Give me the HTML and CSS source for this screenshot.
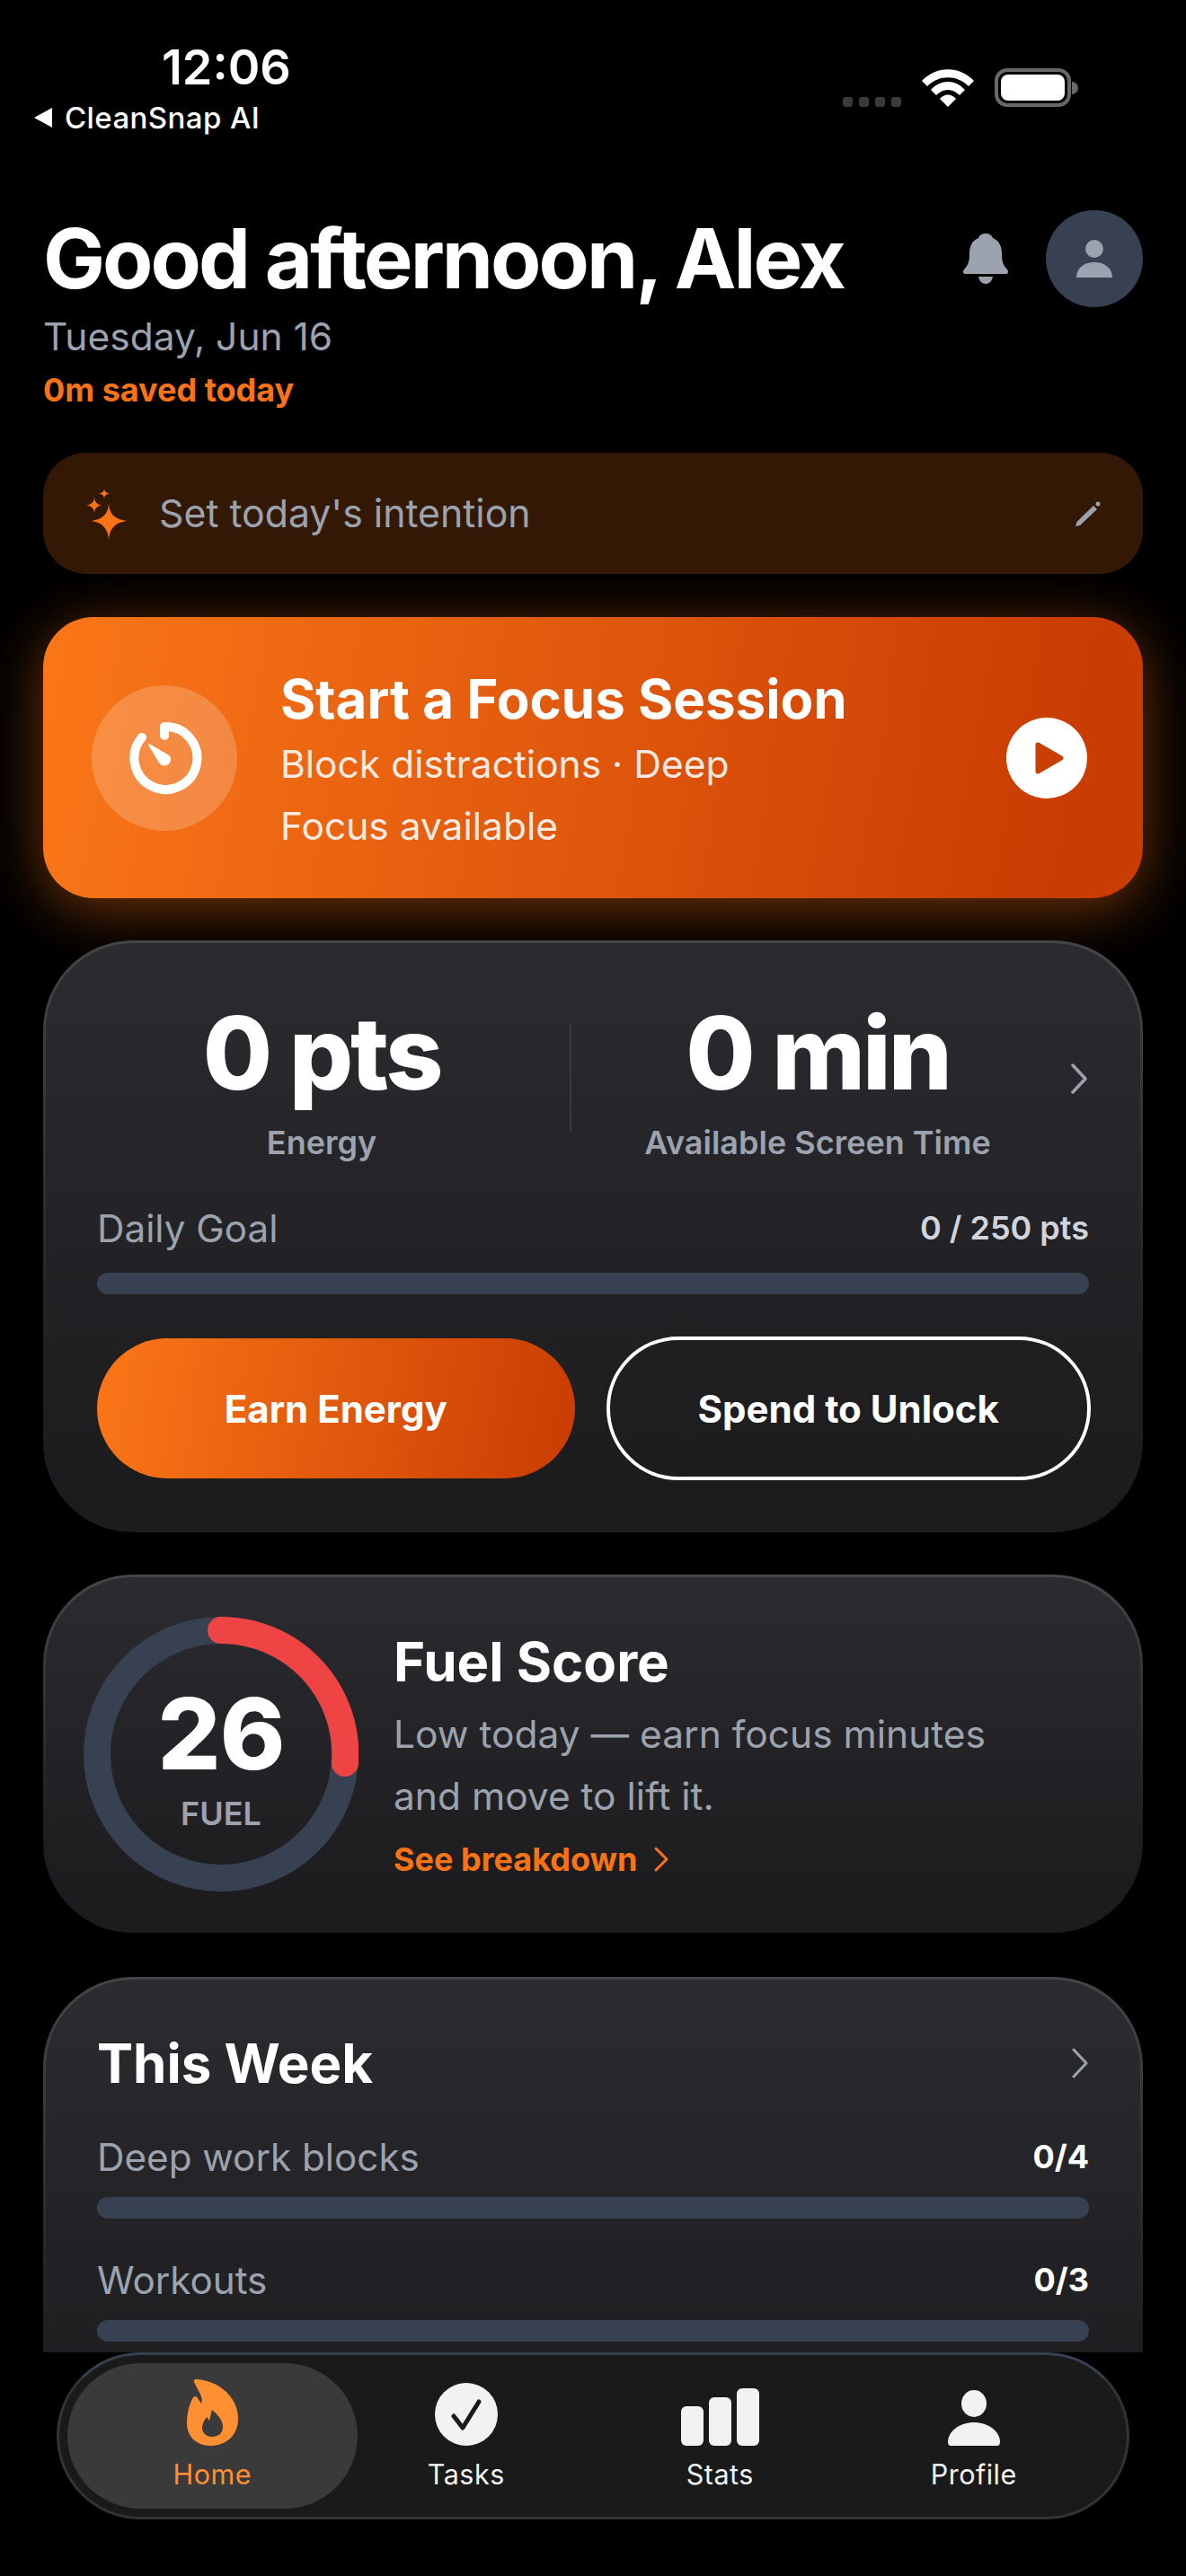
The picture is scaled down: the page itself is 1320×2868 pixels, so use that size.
FILE: index.html
```html
<!DOCTYPE html>
<html lang="en">
<head>
    <meta charset="UTF-8">
    <meta name="viewport" content="width=device-width, initial-scale=1.0">
    <title>CleanSnap AI</title>
    <link rel="stylesheet" href="styles.css">
</head>
<body>
    <div class="screen">
        <div class="content">

            <div class="status">
                <div class="status_left">
                    <div class="time">12:06</div>
                    <div class="back"><span class="back_arrow"></span>CleanSnap AI</div>
                </div>
                <div class="status_right">
                    <div class="signal"><span></span><span></span><span></span><span></span></div>
                    <svg class="wifi" width="58" height="42" viewBox="0 0 58 42">
                        <path d="M0 13 C16 -4 42 -4 58 13 L52 19 C39 6 19 6 6 19Z" fill="#fff"/>
                        <path d="M10 23 C21 11 37 11 48 23 L42 29 C34 21 24 21 16 29Z" fill="#fff"/>
                        <path d="M20 33 C25 27 33 27 38 33 L29 42Z" fill="#fff"/>
                    </svg>
                    <div class="battery"><div class="battery_fill"></div></div>
                    <div class="battery_nub"></div>
                </div>
            </div>

            <div class="header">
                <div class="header_text">
                    <h1 class="greeting">Good afternoon, Alex</h1>
                    <div class="date">Tuesday, Jun 16</div>
                    <div class="saved">0m saved today</div>
                </div>
                <svg class="bell" width="50" height="56" viewBox="0 0 50 56">
                    <path d="M25 0 C29 0 32 2 33 5 C40 8 43 14 43 22 C43 30 44 35 49 40 C51 43 50 45 47 45 L3 45 C0 45 -1 43 1 40 C6 35 7 30 7 22 C7 14 10 8 17 5 C18 2 21 0 25 0Z" fill="#9ca3af"/>
                    <path d="M17 48 L33 48 C32 53 29 56 25 56 C21 56 18 53 17 48Z" fill="#9ca3af"/>
                </svg>
                <div class="avatar">
                    <svg width="40" height="42" viewBox="0 0 40 42">
                        <circle cx="20" cy="10" r="10" fill="#9ca3af"/>
                        <path d="M0 42 C0 31 9 25 20 25 C31 25 40 31 40 42Z" fill="#9ca3af"/>
                    </svg>
                </div>
            </div>

            <div class="intention">
                <svg class="sparkle" width="46" height="58" viewBox="0 0 46 58">
                    <path d="M26 18 C27 30 33 35 46 37 C33 39 27 45 26 58 C25 45 19 39 7 37 C19 35 25 30 26 18Z" fill="#f97316"/>
                    <path d="M10 10 C10 16 13 19 19 19.500 C13 20 10 23 10 29 C10 23 7 20 0 19.500 C7 19 10 16 10 10Z" fill="#f97316"/>
                    <path d="M21 0 C21 4 23 6 27 6.500 C23 7 21 9 21 13 C21 9 19 7 15 6.500 C19 6 21 4 21 0Z" fill="#f97316"/>
                </svg>
                <span class="intention_text">Set today's intention</span>
                <svg class="pencil" width="30" height="28" viewBox="0 0 30 28">
                    <path d="M1 28 L2.500 23 L21 5 L25 9 L6 27Z" fill="#9ca3af"/>
                    <circle cx="26" cy="3" r="2.500" fill="#9ca3af"/>
                </svg>
            </div>

            <div class="focus">
                <div class="focus_icon">
                    <svg width="84" height="84" viewBox="0 0 84 84">
                        <path d="M17 19 A35 35 0 1 0 42 7 L42 17" fill="none" stroke="#fff" stroke-width="10" stroke-linecap="round" stroke-linejoin="round"/>
                        <path d="M25 27 L47 40 A6 6 0 1 1 37 47Z" fill="#fff" stroke="#fff" stroke-width="2" stroke-linejoin="round"/>
                    </svg>
                </div>
                <div class="focus_text">
                    <div class="focus_title">Start a Focus Session</div>
                    <div class="focus_sub">Block distractions · Deep Focus available</div>
                </div>
                <div class="play">
                    <svg width="34" height="38" viewBox="0 0 34 38">
                        <path d="M4 4 L30 19 L4 34Z" fill="#c93e02" stroke="#c93e02" stroke-width="5" stroke-linejoin="round"/>
                    </svg>
                </div>
            </div>

            <div class="card energy">
                <div class="stats">
                    <div class="stat stat_energy">
                        <div class="stat_value">0 pts</div>
                        <div class="stat_label">Energy</div>
                    </div>
                    <div class="stat_divider"></div>
                    <div class="stat stat_time">
                        <div class="stat_value">0 min</div>
                        <div class="stat_label">Available Screen Time</div>
                    </div>
                    <svg class="chevron stat_chevron" width="20" height="34" viewBox="0 0 20 34">
                        <path d="M3 2 L17 17 L3 32" fill="none" stroke="#9ca3af" stroke-width="3.500" stroke-linecap="round" stroke-linejoin="round"/>
                    </svg>
                </div>
                <div class="row_label goal_label">
                    <span class="row_name">Daily Goal</span>
                    <span class="goal_value">0 / 250 pts</span>
                </div>
                <div class="bar"></div>
                <div class="buttons">
                    <div class="btn btn_earn">Earn Energy</div>
                    <div class="btn btn_spend">Spend to Unlock</div>
                </div>
            </div>

            <div class="card fuel">
                <div class="ring">
                    <svg width="306" height="306" viewBox="0 0 306 306">
                        <circle cx="153" cy="153" r="138" fill="none" stroke="#374151" stroke-width="30"/>
                        <path d="M153 15 A138 138 0 0 1 291 163" fill="none" stroke="#ef4444" stroke-width="30" stroke-linecap="round"/>
                    </svg>
                    <div class="ring_text">
                        <div class="ring_value">26</div>
                        <div class="ring_label">FUEL</div>
                    </div>
                </div>
                <div class="fuel_text">
                    <div class="card_title">Fuel Score</div>
                    <div class="fuel_desc">Low today — earn focus minutes and move to lift it.</div>
                    <div class="fuel_link">See breakdown
                        <svg width="16" height="28" viewBox="0 0 16 28">
                            <path d="M2 2 L14 14 L2 26" fill="none" stroke="#f97316" stroke-width="3" stroke-linecap="round" stroke-linejoin="round"/>
                        </svg>
                    </div>
                </div>
            </div>

            <div class="card week">
                <div class="week_head">
                    <div class="card_title">This Week</div>
                    <svg class="chevron" width="20" height="34" viewBox="0 0 20 34">
                        <path d="M3 2 L17 17 L3 32" fill="none" stroke="#9ca3af" stroke-width="3" stroke-linecap="round" stroke-linejoin="round"/>
                    </svg>
                </div>
                <div class="row_label week_label">
                    <span class="row_name">Deep work blocks</span>
                    <span class="week_value">0/4</span>
                </div>
                <div class="bar"></div>
                <div class="row_label week_label week_label_next">
                    <span class="row_name">Workouts</span>
                    <span class="week_value">0/3</span>
                </div>
                <div class="bar"></div>
            </div>

        </div>

        <div class="nav">
            <div class="nav_item active">
                <svg width="57" height="74" viewBox="0 0 57 74">
                    <path fill-rule="evenodd" d="M8 3 C7 0 10 0 12 0 C36 2 57 20 57 44 C57 62 44 74 27 74 C11 74 0 64 0 49 C0 38 3 27 7 20 C9 18 11 19 12 21 L16 27 C19 20 12 12 8 3Z M28 34 C35 40 40 46 40 53 C40 60 35 64 28 64 C22 64 17 60 17 54 C17 50 19 46 22 42 L25 46Z" fill="#ff8f33"/>
                </svg>
                <span>Home</span>
            </div>
            <div class="nav_item">
                <svg width="70" height="70" viewBox="0 0 70 70">
                    <circle cx="35" cy="35" r="35" fill="#f2f2f2"/>
                    <path d="M21 37 L31 50 L49 21" fill="none" stroke="#1a1a1a" stroke-width="5" stroke-linecap="round" stroke-linejoin="round"/>
                </svg>
                <span>Tasks</span>
            </div>
            <div class="nav_item">
                <svg width="87" height="64" viewBox="0 0 87 64">
                    <rect x="0" y="20" width="25" height="44" rx="6" fill="#f2f2f2"/>
                    <rect x="31" y="10" width="25" height="54" rx="6" fill="#f2f2f2"/>
                    <rect x="62" y="0" width="25" height="64" rx="6" fill="#f2f2f2"/>
                </svg>
                <span>Stats</span>
            </div>
            <div class="nav_item">
                <svg width="58" height="62" viewBox="0 0 58 62">
                    <ellipse cx="29" cy="15" rx="14" ry="15" fill="#f2f2f2"/>
                    <path d="M0 58 C0 46 13 36 29 36 C45 36 58 46 58 58 C58 60 57 62 55 62 L3 62 C1 62 0 60 0 58Z" fill="#f2f2f2"/>
                </svg>
                <span>Profile</span>
            </div>
        </div>
    </div>
</body>
</html>
```

FILE: styles.css
```css
*{
    box-sizing: border-box;
}

body{
    margin: 0;
    background: #000;
    font-family: "Inter", "Liberation Sans", sans-serif;
    color: #fff;
}

.screen{
    height: 2868px;
    display: flex;
    flex-direction: column;
    overflow: hidden;
}

.content{
    height: 2619px;
    flex: none;
    overflow: hidden;
    padding: 48px 48px 0;
}

/* status bar */
.status{
    display: flex;
    justify-content: space-between;
    height: 102px;
}

.status_left{
    margin-left: -10px;
}

.time{
    font-size: 54px;
    line-height: 54px;
    font-weight: 600;
    padding-left: 142px;
}

.back{
    display: flex;
    align-items: center;
    font-size: 33px;
    line-height: 40px;
    font-weight: 500;
    letter-spacing: 0.4px;
    margin-top: 9px;
}

.back_arrow{
    width: 0;
    height: 0;
    border-top: 11px solid transparent;
    border-bottom: 11px solid transparent;
    border-right: 20px solid #fff;
    margin-right: 14px;
}

.status_right{
    display: flex;
    align-items: flex-end;
    height: 71px;
    padding-right: 72px;
}

.signal{
    display: flex;
    gap: 7px;
    margin-right: 23px;
}

.signal span{
    width: 11px;
    height: 11px;
    border-radius: 3px;
    background: #3a3a3c;
}

.wifi{
    margin-right: 23px;
}

.battery{
    width: 85px;
    height: 43px;
    border: 4px solid #68686a;
    border-radius: 14px;
    padding: 3px;
}

.battery_fill{
    height: 100%;
    background: #fff;
    border-radius: 8px;
}

.battery_nub{
    width: 7px;
    height: 14px;
    margin: 0 0 14px 1px;
    background: #68686a;
    border-radius: 0 7px 7px 0;
}

/* greeting */
.header{
    display: flex;
    align-items: flex-start;
    margin-top: 84px;
}

.header_text{
    flex: 1;
    padding-top: 8px;
}

.greeting{
    margin: 0;
    font-size: 92px;
    line-height: 92px;
    font-weight: 700;
    letter-spacing: -3px;
}

.date{
    margin-top: 13px;
    font-size: 42.500px;
    line-height: 56px;
    color: #9ca3af;
}

.saved{
    margin-top: 9px;
    font-size: 36px;
    line-height: 44px;
    font-weight: 700;
    color: #f97316;
}

.bell{
    margin: 26px 42px 0 0;
}

.avatar{
    width: 108px;
    height: 108px;
    border-radius: 50%;
    background: #374151;
    display: flex;
    align-items: center;
    justify-content: center;
}

/* intention */
.intention{
    display: flex;
    align-items: center;
    height: 135px;
    margin-top: 48px;
    padding: 0 46px 0 47px;
    border-radius: 48px;
    background: #331905;
}

.sparkle{
    margin-right: 36px;
}

.intention_text{
    flex: 1;
    font-size: 42.800px;
    color: #9ca3af;
}

.pencil{
    flex: none;
}

/* focus */
.focus{
    display: flex;
    align-items: center;
    height: 313px;
    margin-top: 48px;
    padding: 0 62px 0 54px;
    border-radius: 56px;
    background: linear-gradient(100deg, #fa7718, #c93c02 92%);
    box-shadow: 0 12px 64px rgba(249,115,22,0.45);
}

.focus_icon{
    width: 162px;
    height: 162px;
    flex: none;
    margin-right: 48px;
    border-radius: 50%;
    background: rgba(255,255,255,0.2);
    display: flex;
    align-items: center;
    justify-content: center;
}

.focus_text{
    flex: 1;
    padding-top: 6px;
}

.focus_title{
    font-size: 60px;
    line-height: 76px;
    font-weight: 700;
}

.focus_sub{
    width: 560px;
    font-size: 42.500px;
    line-height: 69px;
    color: rgba(255,255,255,0.88);
}

.play{
    width: 90px;
    height: 90px;
    flex: none;
    border-radius: 50%;
    background: #fff;
    display: flex;
    align-items: center;
    justify-content: center;
    padding-left: 6px;
}

/* cards */
.card{
    padding: 0 57px;
    border: 3px solid transparent;
    background: linear-gradient(#2b2b30, #1b1b1d) padding-box, linear-gradient(#464648, #1c1c1e 75%) border-box;
}

.card_title{
    font-size: 60px;
    line-height: 76px;
    font-weight: 700;
}

.energy{
    height: 659px;
    margin-top: 47px;
    padding-top: 57px;
    border-radius: 100px;
}

.stats{
    display: flex;
    align-items: center;
}

.stat{
    text-align: center;
}

.stat_energy{
    width: 552px;
    margin-left: -26px;
}

.stat_time{
    width: 548px;
}

.stat_value{
    font-size: 112px;
    line-height: 130px;
    font-weight: 800;
    letter-spacing: -3px;
}

.stat_label{
    font-size: 36px;
    line-height: 44px;
    font-weight: 600;
    color: #9ca3af;
    margin-top: 13px;
}

.stat_divider{
    width: 2px;
    height: 120px;
    background: #3a3a3e;
}

.chevron{
    flex: none;
}

.stat_chevron{
    margin-left: 7px;
}

.row_label{
    display: flex;
    justify-content: space-between;
    align-items: center;
}

.row_name{
    font-size: 42.200px;
    color: #9ca3af;
}

.goal_label{
    margin-top: 45px;
    height: 56px;
}

.goal_value{
    font-size: 36px;
    font-weight: 600;
    color: #d1d5db;
}

.bar{
    height: 24px;
    border-radius: 12px;
    background: #374151;
}

.energy .bar{
    margin-top: 22px;
}

.buttons{
    display: flex;
    gap: 35px;
    margin-top: 49px;
}

.btn{
    flex: 1;
    height: 156px;
    border-radius: 80px;
    display: flex;
    align-items: center;
    justify-content: center;
    font-size: 42px;
    font-weight: 700;
}

.btn_earn{
    background: linear-gradient(100deg, #fa7718, #c93c02);
}

.btn_spend{
    margin: -2px -2px -2px 0;
    height: 160px;
    border: 4px solid #fff;
}

/* fuel */
.fuel{
    display: flex;
    align-items: center;
    height: 399px;
    margin-top: 47px;
    padding: 0 0 0 42px;
    border-radius: 100px;
}

.ring{
    display: grid;
    flex: none;
    margin-right: 39px;
}

.ring svg, .ring_text{
    grid-area: 1 / 1;
}

.ring_text{
    display: flex;
    flex-direction: column;
    align-items: center;
    justify-content: center;
    padding-top: 10px;
}

.ring_value{
    font-size: 110px;
    line-height: 110px;
    font-weight: 800;
    letter-spacing: -1px;
}

.ring_label{
    font-size: 36px;
    line-height: 44px;
    font-weight: 600;
    color: #9ca3af;
    margin-top: 12px;
}

.fuel_text{
    flex: 1;
    padding-bottom: 2px;
}

.fuel_desc{
    width: 680px;
    margin-top: 8px;
    font-size: 42.500px;
    line-height: 69px;
    color: #9ca3af;
}

.fuel_link{
    display: flex;
    align-items: center;
    gap: 18px;
    margin-top: 14px;
    font-size: 36px;
    line-height: 44px;
    font-weight: 700;
    color: #f97316;
}

/* this week */
.week{
    height: 560px;
    margin-top: 49px;
    padding-top: 55px;
    border-radius: 100px;
}

.week_head{
    display: flex;
    justify-content: space-between;
    align-items: center;
}

.week_label{
    height: 56px;
    margin-top: 38px;
}

.week_label_next{
    margin-top: 40px;
}

.week_value{
    font-size: 36px;
    font-weight: 700;
}

.week .bar{
    margin-top: 17px;
}

/* bottom nav */
.nav{
    display: grid;
    grid-template-columns: repeat(4, 1fr);
    height: 186px;
    margin: 0 63px;
    padding: 9px 29px;
    border: 3px solid #333336;
    border-top-color: #374151;
    border-radius: 93px;
    background: #1a1a1a;
}

.nav_item{
    display: flex;
    flex-direction: column;
    align-items: center;
    justify-content: flex-end;
    padding-bottom: 18px;
    font-size: 30.500px;
    line-height: 40px;
    font-weight: 400;
    letter-spacing: 0.5px;
    color: #f2f2f2;
}

.nav_item svg{
    margin-bottom: 12px;
}

.nav_item.active{
    margin: 0 -20px;
    border-radius: 81px;
    background: #3a3a3a;
    color: #ff8f33;
}
```
